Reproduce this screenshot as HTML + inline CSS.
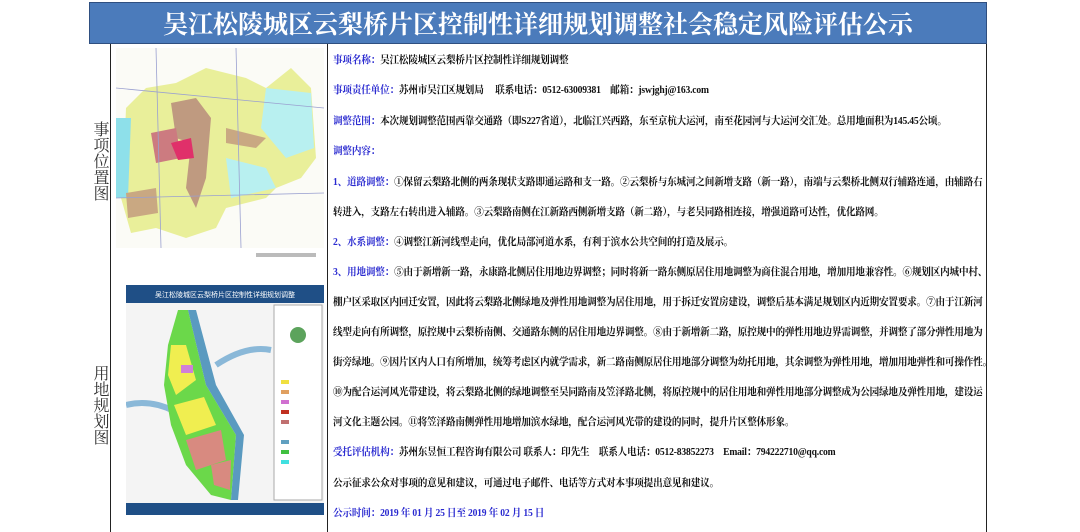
<!DOCTYPE html>
<html><head><meta charset="utf-8"><style>
body{margin:0;width:1080px;height:532px;background:#fff;position:relative;overflow:hidden;font-family:"Liberation Serif","Noto Serif CJK SC",serif}
.hdr{position:absolute;left:89px;top:2px;width:898px;height:42px;background:#4b7bbb;border:1px solid #2f4f80;box-sizing:border-box;color:#fff;font-size:25px;letter-spacing:0px;text-align:center;line-height:40px;font-family:"Noto Serif CJK SC",serif;font-weight:bold;white-space:nowrap}
.vl{position:absolute;width:1px;background:#222;top:44px;height:488px}
.lab{position:absolute;left:93px;width:17px;font-size:16px;line-height:16px;color:#333;text-align:center}
.t{position:absolute;left:333px;font-size:10.5px;color:#111;white-space:nowrap;font-weight:bold;letter-spacing:-0.2px;transform:scaleX(0.914);transform-origin:left top}
.b{color:#2a2ad0}
</style></head><body>
<div class="hdr">吴江松陵城区云梨桥片区控制性详细规划调整社会稳定风险评估公示</div>
<div class="vl" style="left:110px"></div>
<div class="vl" style="left:327px"></div>
<div class="vl" style="left:986px"></div>
<div class="lab" style="top:123px">事项位置图</div>
<div class="lab" style="top:367px">用地规划图</div>

<svg style="position:absolute;left:116px;top:48px" width="208" height="212">
<rect width="208" height="200" fill="#fbfbf6"/>
<path d="M10 60 L30 40 L60 35 L90 20 L130 30 L150 40 L175 20 L195 40 L200 110 L185 130 L160 140 L150 150 L110 160 L100 180 L70 190 L40 180 L15 185 L5 150 L8 110 Z" fill="#e9ef9a"/>
<path d="M150 40 L195 45 L198 100 L170 110 L145 80 Z" fill="#b8f0f0"/>
<path d="M110 110 L150 120 L160 140 L115 150 Z" fill="#b8f0f0"/>
<path d="M0 70 L15 70 L12 150 L0 150 Z" fill="#8ee0ea"/>
<path d="M55 55 L80 50 L95 70 L90 130 L80 160 L70 140 L75 95 L60 90 Z" fill="#bf9a80"/>
<path d="M35 85 L60 80 L65 110 L40 115 Z" fill="#cc7b80"/>
<path d="M55 95 L75 90 L78 110 L62 112 Z" fill="#e0306a"/>
<path d="M10 145 L40 140 L42 165 L12 170 Z" fill="#c9a882"/>
<path d="M110 80 L150 90 L140 100 L110 95 Z" fill="#c9a882"/>
<path d="M0 40 L208 60 M0 150 L208 145 M40 0 L45 200 M120 0 L125 200" stroke="#9aa0d0" stroke-width="0.8" fill="none"/>
<rect x="140" y="205" width="60" height="4" fill="#bbb"/>
</svg>

<svg style="position:absolute;left:126px;top:285px" width="198" height="230">
<rect width="198" height="230" fill="#f4f4f4"/>
<rect width="198" height="18" fill="#1f4f86"/>
<text x="99" y="12" font-size="7" fill="#fff" text-anchor="middle" font-family="Noto Sans CJK SC,sans-serif">吴江松陵城区云梨桥片区控制性详细规划调整</text>
<rect x="148" y="20" width="48" height="195" fill="#fff" stroke="#aaa"/>
<circle cx="172" cy="50" r="8" fill="#5ca35c"/>
<rect x="155" y="95" width="8" height="4" fill="#f0e040"/><rect x="155" y="105" width="8" height="4" fill="#e0a060"/>
<rect x="155" y="115" width="8" height="4" fill="#d070d0"/><rect x="155" y="125" width="8" height="4" fill="#c03020"/>
<rect x="155" y="135" width="8" height="4" fill="#c07070"/><rect x="155" y="155" width="8" height="4" fill="#60a0c0"/>
<rect x="155" y="165" width="8" height="4" fill="#40c040"/><rect x="155" y="175" width="8" height="4" fill="#40e0e0"/>
<path d="M0 120 Q40 110 80 150 M90 80 Q120 60 145 65" stroke="#8ab8d8" stroke-width="6" fill="none"/>
<path d="M52 25 L62 25 L80 100 L110 150 L105 215 L85 210 L60 180 L45 140 L38 100 L42 60 Z" fill="#6bd84a"/>
<path d="M62 25 L70 25 L90 100 L118 150 L112 215 L105 215 L110 150 L80 100 Z" fill="#5a9ac0"/>
<path d="M45 60 L60 60 L70 95 L50 110 L42 90 Z" fill="#f0ee50"/>
<path d="M48 120 L78 112 L90 140 L60 150 Z" fill="#f0ee50"/>
<path d="M60 155 L95 145 L100 175 L70 185 Z" fill="#d88a80"/>
<path d="M85 180 L105 175 L104 205 L88 200 Z" fill="#d88a80"/>
<rect x="55" y="80" width="12" height="8" fill="#d080d8"/>
<rect x="0" y="218" width="198" height="12" fill="#1f4f86"/>
</svg>

<div class="t" style="top:52px"><span class="b">事项名称：</span>吴江松陵城区云梨桥片区控制性详细规划调整</div>
<div class="t" style="top:82px"><span class="b">事项责任单位：</span>苏州市吴江区规划局　 联系电话：0512-63009381　邮箱：jswjghj@163.com</div>
<div class="t" style="top:113px"><span class="b">调整范围：</span>本次规划调整范围西靠交通路（即S227省道），北临江兴西路，东至京杭大运河，南至花园河与大运河交汇处。总用地面积为145.45公顷。</div>
<div class="t" style="top:143px"><span class="b">调整内容：</span></div>
<div class="t" style="top:174px"><span class="b">1、道路调整：</span>①保留云梨路北侧的两条现状支路即通运路和支一路。②云梨桥与东城河之间新增支路（新一路），南端与云梨桥北侧双行辅路连通，由辅路右</div>
<div class="t" style="top:204px">转进入，支路左右转出进入辅路。③云梨路南侧在江新路西侧新增支路（新二路），与老吴同路相连接，增强道路可达性，优化路网。</div>
<div class="t" style="top:234px"><span class="b">2、水系调整：</span>④调整江新河线型走向，优化局部河道水系，有利于滨水公共空间的打造及展示。</div>
<div class="t" style="top:264px"><span class="b">3、用地调整：</span>⑤由于新增新一路，永康路北侧居住用地边界调整；同时将新一路东侧原居住用地调整为商住混合用地，增加用地兼容性。⑥规划区内城中村、</div>
<div class="t" style="top:294px">棚户区采取区内回迁安置，因此将云梨路北侧绿地及弹性用地调整为居住用地，用于拆迁安置房建设，调整后基本满足规划区内近期安置要求。⑦由于江新河</div>
<div class="t" style="top:324px">线型走向有所调整，原控规中云梨桥南侧、交通路东侧的居住用地边界调整。⑧由于新增新二路，原控规中的弹性用地边界需调整，并调整了部分弹性用地为</div>
<div class="t" style="top:354px">街旁绿地。⑨因片区内人口有所增加，统筹考虑区内就学需求，新二路南侧原居住用地部分调整为幼托用地，其余调整为弹性用地，增加用地弹性和可操作性。</div>
<div class="t" style="top:384px">⑩为配合运河风光带建设，将云梨路北侧的绿地调整至吴同路南及笠泽路北侧，将原控规中的居住用地和弹性用地部分调整成为公园绿地及弹性用地，建设运</div>
<div class="t" style="top:414px">河文化主题公园。⑪将笠泽路南侧弹性用地增加滨水绿地，配合运河风光带的建设的同时，提升片区整体形象。</div>
<div class="t" style="top:444px"><span class="b">受托评估机构：</span>苏州东昱恒工程咨询有限公司 联系人：印先生　联系人电话：0512-83852273　Email：794222710@qq.com</div>
<div class="t" style="top:475px">公示征求公众对事项的意见和建议，可通过电子邮件、电话等方式对本事项提出意见和建议。</div>
<div class="t" style="top:505px"><span class="b">公示时间：2019 年 01 月 25 日至 2019 年 02 月 15 日</span></div>
</body></html>
